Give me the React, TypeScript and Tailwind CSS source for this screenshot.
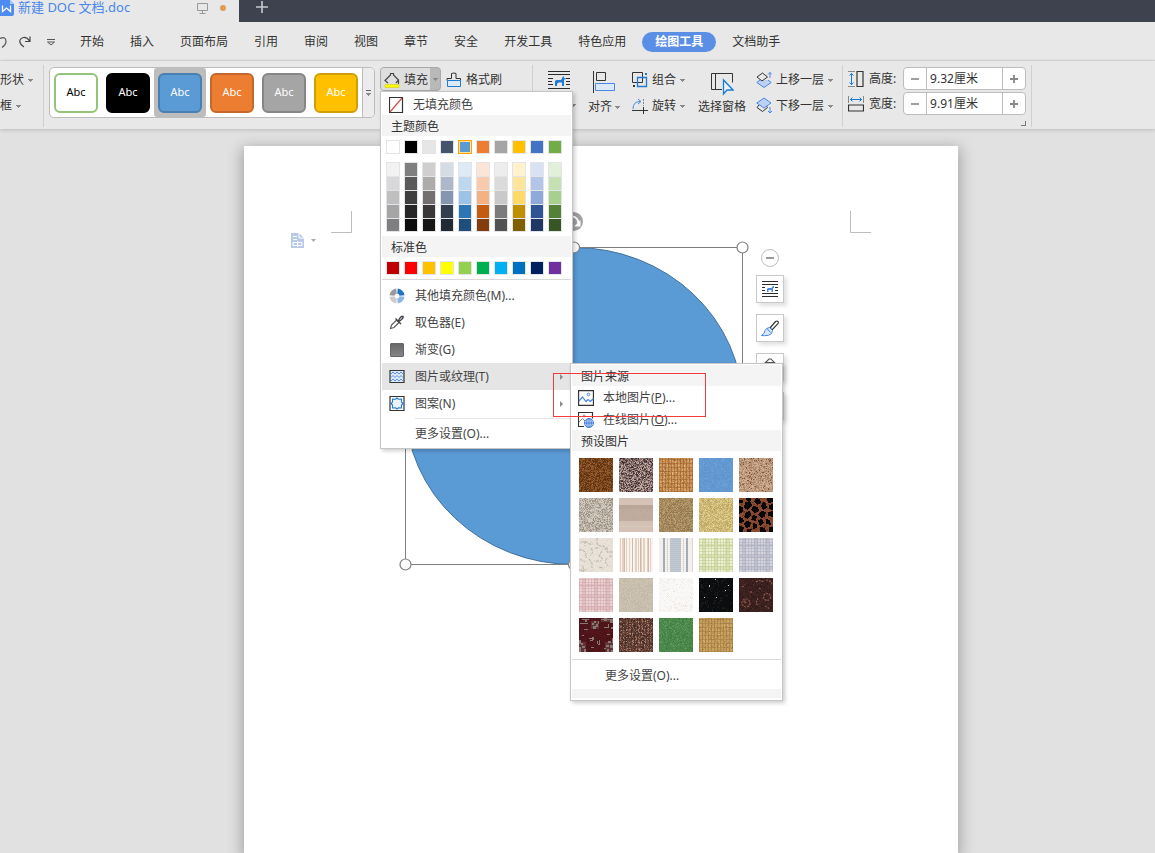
import React from "react";

type Kids = { children?: React.ReactNode };

const INK = "#333333";
const BLUE = "#1f7ad1";

/* ---------- small drawings ---------- */

function Icon({ w, h, children }: Kids & { w: number; h: number }) {
  return (
    <svg width={w} height={h} viewBox={`0 0 ${w} ${h}`} fill="none" stroke={INK} strokeWidth="1" className="shrink-0" aria-hidden="true">
      {children}
    </svg>
  );
}

function Caret() {
  return (
    <svg width="5" height="3" viewBox="0 0 5 3" fill="#8a8a8a" className="shrink-0" aria-hidden="true" shapeRendering="crispEdges">
      <path d="M0 0h5v1H0zM1 1h3v1H1zM2 2h1v1H2z" />
    </svg>
  );
}

function RightCaret() {
  return (
    <svg width="3" height="6" viewBox="0 0 3 6" fill="#8a8a8a" className="shrink-0" aria-hidden="true">
      <path d="M0 0 3 3 0 6z" />
    </svg>
  );
}

function WrapIcon() {
  return (
    <Icon w={22} h={21}>
      <path d="M0 1.500h22M0 4.500h22M0 8.500h5M18 8.500h4M0 11.500h4M18 11.500h4M0 14.500h5M18 14.500h4M0 18.500h22" stroke="#2b2b2b" strokeWidth="1.200" />
      <path d="M7 16v-5l1.500-1H13l2-3.500h1V8h1.500v1.500H16V16h-2v-3.500h-3.500L9 14v2z" fill={BLUE} stroke="none" />
    </Icon>
  );
}

function SmallWrapIcon() {
  return (
    <Icon w={16} h={18}>
      <path d="M0 1.500h16M0 4.500h16M0 7.500h3M13 7.500h3M0 10.500h3M13 10.500h3M0 13.500h16M0 16.500h16" stroke="#2b2b2b" />
      <path d="M5 12V9l1-1h3.500L11 6h1v2h-1v4H9.500v-2h-3v2z" fill="#4a86e8" stroke="none" />
    </Icon>
  );
}

/* ---------- texture swatches ---------- */

const SIDE = 34;

function random(seed: number) {
  let s = seed * 7919 + 17;
  return () => {
    s = (s * 1103515245 + 12345) % 2147483648;
    return s / 2147483648;
  };
}

type Texture = { name: string; base: string; dots?: [string, number][]; kind?: "weave" | "stripes" | "spots" | "bands" | "plaid" | "floral" | "cracks" };

const textures: Texture[] = [
  { name: "棕色大理石", base: "#7c461d", dots: [["#5f3212", 0.3], ["#8f572a", 0.28], ["#a2683a", 0.05]] },
  { name: "花岗岩", base: "#8d7672", dots: [["#5a4647", 0.26], ["#bcaaa3", 0.26], ["#382829", 0.08]] },
  { name: "编织物", base: "#cf955a", dots: [["#b27a42", 0.15], ["#e6b579", 0.12]], kind: "weave" },
  { name: "蓝色面巾纸", base: "#6499d1", dots: [["#5e94cc", 0.26], ["#6fa1d6", 0.15]] },
  { name: "沙滩", base: "#bf9a7d", dots: [["#aa8466", 0.25], ["#d0b195", 0.25], ["#7c5740", 0.06]] },
  { name: "鹅卵石", base: "#b9b0a3", dots: [["#9c9284", 0.25], ["#d0cac0", 0.3]] },
  { name: "信纸", base: "#bfac9e", dots: [["#b9a698", 0.12]], kind: "bands" },
  { name: "再生纸", base: "#a58a5e", dots: [["#917750", 0.28], ["#b99e70", 0.24]] },
  { name: "羊皮纸", base: "#cdb975", dots: [["#bca662", 0.22], ["#dfcf90", 0.26]] },
  { name: "豹纹", base: "#8b4b32", dots: [["#713924", 0.25]], kind: "spots" },
  { name: "裂纹", base: "#e9e2d9", dots: [["#e0d7cc", 0.2]], kind: "cracks" },
  { name: "细条纹", base: "#f8f3ed", kind: "stripes" },
  { name: "宽条纹", base: "#f2eeeb" },
  { name: "绿格布", base: "#edf0d3", kind: "plaid" },
  { name: "灰格布", base: "#d6d5de", kind: "plaid" },
  { name: "粉格布", base: "#ead3d3", kind: "plaid" },
  { name: "亚麻", base: "#c8bfae", dots: [["#c1b7a5", 0.25], ["#cec5b5", 0.2]] },
  { name: "白色大理石", base: "#faf8f6", dots: [["#ece6e2", 0.08], ["#f3efed", 0.12]] },
  { name: "星空", base: "#0c0d0e", dots: [["#1e2021", 0.1], ["#cccccc", 0.012]] },
  { name: "棕色花纹", base: "#3c2121", dots: [["#2f1919", 0.25], ["#4a2a27", 0.13]], kind: "floral" },
  { name: "红色花纹", base: "#51151a", dots: [["#461115", 0.2]], kind: "floral" },
  { name: "粗呢", base: "#70483b", dots: [["#4a312a", 0.28], ["#9c6e5b", 0.22], ["#b08b79", 0.06]], kind: "weave" },
  { name: "绿色大理石", base: "#4b894b", dots: [["#427b43", 0.2], ["#5c9a5c", 0.15]] },
  { name: "麻布", base: "#c69e5d", dots: [["#b18746", 0.12], ["#d6b075", 0.12]], kind: "weave" },
];

function speckle(texture: Texture, seed: number) {
  const next = random(seed);
  const paths = (texture.dots ?? []).map(() => "");
  for (let y = 0; y < SIDE; y++) {
    for (let x = 0; x < SIDE; x++) {
      let r = next();
      for (let i = 0; i < paths.length; i++) {
        const share = texture.dots![i][1];
        if (r < share) {
          paths[i] += `M${x} ${y}h1v1h-1z`;
          break;
        }
        r -= share;
      }
    }
  }
  return paths;
}

function lines(step: number, vertical: boolean, offset = 0) {
  let d = "";
  for (let p = offset; p < SIDE; p += step) d += vertical ? `M${p} 0h1v34h-1z` : `M0 ${p}h34v1H0z`;
  return d;
}

function Ornament({ texture, index }: { texture: Texture; index: number }) {
  if (texture.kind === "weave") {
    const dark = index === 21 ? "#3b2822" : index === 2 ? "#8e5826" : "#977039";
    return (
      <g fill={dark}>
        <path d={lines(3, true)} opacity="0.5" />
        <path d={lines(4, false, 1)} opacity={index === 21 ? 0.2 : 0.4} />
      </g>
    );
  }
  if (texture.kind === "bands") {
    return (
      <>
        <path d="M0 0h34v7H0z" fill="#d3c2b5" />
        <path d="M0 7h34v4H0z" fill="#b9a698" />
        <path d="M0 23h34v11H0z" fill="#d2c1b4" />
        <path d="M0 28h34v1H0z" fill="#d9cabe" />
      </>
    );
  }
  if (texture.kind === "stripes") {
    return (
      <>
        <path d={lines(3, true, 1)} fill="#e4d0bf" />
        <path d={lines(7, true, 3)} fill="#e9d0c7" />
        <path d={lines(8, true, 5)} fill="#cdbcae" />
      </>
    );
  }
  if (texture.kind === "plaid") {
    const color = index === 13 ? "#b7c685" : index === 14 ? "#a4a6bb" : "#cf9fa5";
    return (
      <g fill={color}>
        <path d={lines(3, true)} opacity="0.45" />
        <path d={lines(3, false, 1)} opacity="0.45" />
        <path d="M4 0h3v34H4zM15 0h4v34h-4zM26 0h4v34h-4zM0 6h34v3H0zM0 17h34v3H0zM0 28h34v3H0z" opacity="0.35" />
      </g>
    );
  }
  if (texture.kind === "spots") {
    return (
      <g fill="#090708">
        <path d="M0 2h4v3H0zM7 0h5v3H8zM17 0l4 1 1 4-4 2-3-3zM28 0h6v4l-5 1z" />
        <path d="M6 4l5-1 2 4-4 5-4-2zM24 4l3 1 1 5-4 2-2-4zM30 7l4-1v6l-4-1zM14 8l5 1 1 4-4 2-4-3zM0 8l4 1v5l-4 2z" />
        <path d="M7 14l4-1 1 4-3 4-4-2zM22 13l5 1-1 5-4 1-3-3zM29 14l5-1v6l-5-1zM14 17l4 1-1 5-5-1zM0 19l4 1 1 4-5 1z" />
        <path d="M7 23l5 1-1 5-4 1-2-4zM19 22l4-1 2 4-4 3zM27 21l4 1 1 5-5-1zM14 25l4 1v4l-4 1zM0 28l5 1-1 5H0zM8 31h5l-1 3H8zM21 29l5 1 1 4h-6zM30 29h4v5h-4z" />
      </g>
    );
  }
  if (texture.kind === "cracks") {
    return <path d="M2 4h6l2 2h4M6 3v5M18 0v6l3 2h4l2 4M0 12h4l3 3v5M12 10l2 4-3 4M16 10h4M23 13l-3 5 4 3M28 9v5h6M1 21l5 3M10 21l3 4v5M17 23h5M28 20l-2 4 3 4M30 18h4M4 28v6M20 29l4 1M0 32h7" fill="none" stroke="#a99e91" strokeWidth="0.7" strokeDasharray="3 1" shapeRendering="auto" />;
  }
  if (texture.kind === "floral" && index === 19) {
    return (
      <g fill="none" stroke="#8f5a4b" strokeWidth="1.200" strokeDasharray="2 1" shapeRendering="auto">
        <circle cx="28" cy="19" r="3.500" />
        <circle cx="7" cy="25" r="4" />
        <circle cx="6" cy="24" r="1" />
        <path d="M17 4q4-3 7 0M27 2q5 0 6 5M3 9l3-2M19 20l-2 5 2 3M20 10l3 2M26 28l5 3M12 13v3" />
      </g>
    );
  }
  if (texture.kind === "floral") {
    return (
      <g>
        <g fill="#877973">
          <path d="M3 1h7v1H3zM6 2h2v2H6zM1 5h8v1H1zM13 5h2v2h-2zM15 3h2v2h-2zM17 6h2v3h-2zM14 8h3v3h-3zM19 3h1v3h-1z" />
          <path d="M22 1h12v1H22zM25 0h3v3h-3zM31 2h3v3h-3zM25 9h5v1h-5zM29 6h1v3h-1zM32 9h2v2h-2z" />
          <path d="M10 20h3v1h-3zM13 19h2v3h-2zM11 22h3v1h-3zM18 23h1v3h-1zM19 26h2v1h-2zM20 22h1v4h-1z" />
          <path d="M0 22h2v4H0zM2 25h2v2H2zM3 28h3v2H3zM0 29h2v5H0zM5 31h2v3H5zM33 20h1v5h-1zM29 23h3v2h-3zM27 27h3v2h-3zM31 27h3v3h-3zM28 31h2v3h-2zM32 32h2v2h-2zM25 30h2v1h-2z" />
          <path d="M5 11h4v1H5zM12 29h3v1h-3zM28 16h3v1h-3zM3 17h2v1H3z" />
        </g>
        <path d="M12 3h8v8h-8zM0 24h7v10H0zM26 24h8v10h-8zM22 0h12v4H22z" fill="#877973" opacity="0.3" />
      </g>
    );
  }
  if (index === 12) {
    return (
      <>
        <path d="M11 0h11v34H11z" fill="#b8c1cb" />
        <path d="M4 0h2v34H4zM27 0h2v34h-2z" fill="#9ba6b2" />
        <path d="M8 0h1v34H8zM24 0h1v34h-1zM33 0h1v34h-1z" fill="#ded3cb" />
        <path d={lines(2, false)} fill="#ffffff" opacity="0.15" />
      </>
    );
  }
  return null;
}

function TextureSwatch({ texture, index }: { texture: Texture; index: number }) {
  return (
    <button type="button" aria-label={texture.name} className="size-[34px]">
      <svg viewBox="0 0 34 34" className="block size-full" shapeRendering="crispEdges" aria-hidden="true">
        <rect width="34" height="34" fill={texture.base} />
        {speckle(texture, index + 1).map((d, i) => (
          <path key={i} d={d} fill={texture.dots![i][0]} />
        ))}
        <Ornament texture={texture} index={index} />
      </svg>
    </button>
  );
}

/* ---------- title and menu bar ---------- */

const tabsBefore = ["开始", "插入", "页面布局", "引用", "审阅", "视图", "章节", "安全", "开发工具", "特色应用"];

function TitleBar() {
  return (
    <header className="flex h-[22px] bg-[#3e414e]">
      <div className="flex w-[239px] items-start bg-[#e8e8e8]">
        <svg width="14" height="16" viewBox="0 0 14 16" aria-hidden="true">
          <path d="M0 0h10l4 4v10a2 2 0 0 1-2 2H0z" fill="#4e8bf0" />
          <path d="M10 0l4 4h-4z" fill="#a9c8fb" />
          <path d="M2.500 5.500v6l4-3.500 4 3.500v-6" fill="none" stroke="#fff" strokeWidth="1.300" />
        </svg>
        <span className="ml-1 text-[13px] leading-[15px] text-[#4a86e8]">新建 DOC 文档.doc</span>
        <span className="ml-auto flex h-4 items-center gap-3 pr-[13px]">
          <Icon w={11} h={12}>
            <path d="M0.500 1.500h10v7h-10zM5.500 8.500v3M2.500 11.500h6" stroke="#999" />
          </Icon>
          <span className="size-[6px] rounded-full bg-[#e39b56]" />
        </span>
      </div>
      <button type="button" aria-label="新建标签" className="ml-[17px] h-[14px] w-3">
        <Icon w={12} h={14}>
          <path d="M0 7h12M6 1v12" stroke="#c9cad0" strokeWidth="1.600" />
        </Icon>
      </button>
    </header>
  );
}

function MenuBar() {
  return (
    <nav className="flex h-[39px] items-center border-b border-[#d8d8d8] pt-[2px] whitespace-nowrap">
      <div className="flex w-20 items-center">
        <button type="button" aria-label="撤销">
          <Icon w={7} h={14}>
            <path d="M0 3.500q6-2.500 6 3 0 3-4 6" strokeWidth="1.200" stroke="#555" />
          </Icon>
        </button>
        <button type="button" aria-label="恢复" className="ml-3">
          <Icon w={12} h={14}>
            <path d="M11 1.500v5H6M10.500 6Q8 2 4.500 2.500 0.500 3.500 0.800 7 1.500 10 5 12" stroke="#444" strokeWidth="1.200" />
          </Icon>
        </button>
        <button type="button" aria-label="自定义快速访问工具栏" className="ml-4">
          <Icon w={8} h={8}>
            <path d="M0 1.500h8M0.500 4l3.500 3 3.500-3z" stroke="#555" />
          </Icon>
        </button>
      </div>
      <div className="flex items-center gap-[26px]">
        {tabsBefore.map((t) => (
          <button type="button" key={t}>{t}</button>
        ))}
      </div>
      <button type="button" className="mx-4 h-5 rounded-full bg-[#5b8fe6] px-[13px] font-bold text-white">绘图工具</button>
      <button type="button">文档助手</button>
    </nav>
  );
}

/* ---------- ribbon ---------- */

const styles = [
  "border-[#93c47a] bg-white text-black",
  "border-black bg-black text-white",
  "border-[#4a7fb0] bg-[#5b9bd5] text-white",
  "border-[#c4682f] bg-[#ed7d31] text-white",
  "border-[#868686] bg-[#a5a5a5] text-white",
  "border-[#cf9f0a] bg-[#ffc000] text-white",
];

function Divider() {
  return <div className="h-[62px] w-px shrink-0 bg-[#cfcfcf]" />;
}

function Command({ icon, label }: { icon: React.ReactNode; label: string }) {
  return (
    <button type="button" className="flex h-[26px] items-center gap-1">
      {icon}
      <span>{label}</span>
      <Caret />
    </button>
  );
}

function SizeField({ id, label, value, icon }: { id: string; label: string; value: string; icon: React.ReactNode }) {
  return (
    <div className="flex items-center">
      {icon}
      <label htmlFor={id} className="ml-[5px] w-[34px]">{label}:</label>
      <div className="flex h-[23px] w-[123px] rounded-[4px] border border-[#bdbdbd] bg-white">
        <button type="button" aria-label={`减小${label}`} className="flex w-[22px] items-center justify-center">
          <Icon w={8} h={8}><path d="M0 4h8" stroke="#888" strokeWidth="1.600" /></Icon>
        </button>
        <input id={id} defaultValue={value} className="w-[77px] border-x border-[#bdbdbd] px-[3px] outline-none" />
        <button type="button" aria-label={`增大${label}`} className="flex w-[22px] items-center justify-center">
          <Icon w={8} h={8}><path d="M0 4h8M4 0v8" stroke="#888" strokeWidth="1.800" /></Icon>
        </button>
      </div>
    </div>
  );
}

function Ribbon() {
  return (
    <div className="relative z-10 flex h-[68px] pt-1 whitespace-nowrap shadow-[0_1px_4px_rgba(0,0,0,0.18)]">
      <div className="flex w-[43px] shrink-0 flex-col overflow-hidden pt-[2px]">
        <button type="button" className="flex h-[26px] items-center gap-1">形状 <Caret /></button>
        <button type="button" className="flex h-[26px] items-center gap-1">框 <Caret /></button>
      </div>
      <Divider />
      <div className="mt-[2px] ml-[5px] flex h-[51px] w-[326px] shrink-0 overflow-hidden rounded-[5px] border border-[#bcbcbc] bg-white">
        {styles.map((s, i) => (
          <button type="button" key={s} className={i === 2 ? "flex w-[52px] items-center justify-center rounded-[3px] bg-[#bdbdbd]" : "flex w-[52px] items-center justify-center"}>
            <span className={`flex h-10 w-11 items-center justify-center rounded-[6px] border-2 text-[11px] ${s}`}>Abc</span>
          </button>
        ))}
        <button type="button" aria-label="更多样式" className="flex flex-1 flex-col items-center justify-center gap-[2px] border-l border-[#bcbcbc] bg-[#ececec]">
          <span className="h-px w-[5px] bg-[#666]" />
          <Caret />
        </button>
      </div>
      <div className="mt-[2px] ml-[5px] flex h-[24px] w-[61px] shrink-0 items-stretch rounded-[4px] border border-[#a9a9a9] bg-[#b9b9b9]">
        <button type="button" className="flex w-[49px] items-center gap-1 rounded-l-[3px] bg-[#dedede] pt-[1px] pl-[3px]">
          <Icon w={16} h={16}>
            <path d="M4 11L1 8.500 6.500 3V1.500h3V3l5 5-2.500 3M14.500 8v4" stroke="#444" strokeWidth="1.200" />
            <path d="M1 12.500h14v3H1z" fill="#ffff00" stroke="#c9c900" strokeWidth="0.500" />
          </Icon>
          填充
        </button>
        <button type="button" aria-label="填充选项" className="flex flex-1 items-center justify-center"><Caret /></button>
      </div>
      <button type="button" className="mt-[2px] ml-[5px] flex h-6 items-center gap-1 pt-[1px]">
        <Icon w={16} h={16}>
          <path d="M1 8.500v-2h4.500v-5q2.500-1 4.500 0v5h4.500v2" />
          <path d="M1.500 8.500h13v6h-13z" stroke={BLUE} fill="#dce9f7" />
        </Icon>
        格式刷
      </button>
      <div className="ml-[30px]"><Divider /></div>
      <button type="button" className="mt-[5px] ml-[15px] flex w-[28px] flex-col" aria-label="环绕">
        <WrapIcon />
        <span className="mt-[13px] self-end"><Caret /></span>
      </button>
      <button type="button" className="mt-[6px] ml-3 flex flex-col items-start">
        <span className="pl-[5px]">
          <Icon w={22} h={22}>
            <path d="M0.500 0v22M3.500 1.500h9v8h-9z" />
            <path d="M2.500 12.500h19v7h-19z" stroke="#4a86e8" fill="#dde8f8" />
          </Icon>
        </span>
        <span className="mt-[5px] flex items-center gap-[3px] leading-[18px]">对齐 <Caret /></span>
      </button>
      <div className="ml-3 flex flex-col pt-[2px]">
        <Command label="组合" icon={
          <Icon w={16} h={16}>
            <path d="M0.500 0.500h10v10h-10z" />
            <path d="M5.500 5.500h9v9h-9z" stroke={BLUE} strokeWidth="1.300" />
            <path d="M13 1h2v2h-2z" fill={BLUE} stroke="none" />
            <path d="M1 13h2v2H1z" fill={INK} stroke="none" />
          </Icon>} />
        <Command label="旋转" icon={
          <Icon w={16} h={16}>
            <path d="M0 12.500h16M11.500 9v7" />
            <path d="M11.500 1v7" strokeDasharray="2 1" stroke="#888" />
            <path d="M1 11Q1 3.500 8 3.500M6 1l3 2.500L6 6" stroke="#4a86e8" />
          </Icon>} />
      </div>
      <button type="button" className="mt-[7px] ml-[13px] flex flex-col items-center">
        <Icon w={24} h={24}>
          <path d="M12 17.500H1.500v-16h21v9M5.500 1.500v16" />
          <path d="M13.500 8v14l3.500-4h6z" stroke={BLUE} strokeWidth="1.300" fill="#eaf2fb" />
        </Icon>
        <span className="mt-[2px] leading-[18px]">选择窗格</span>
      </button>
      <div className="ml-[10px] flex flex-col pt-[2px]">
        <Command label="上移一层" icon={
          <Icon w={16} h={18}>
            <path d="M4 9L0.800 11.500 8 16.500l7.200-5L12 9" stroke="#4a86e8" fill="#bdd1f4" />
            <path d="M1 6l5.500-4 5 4-5.500 4z" fill="#e8e8e8" />
            <path d="M14 7V1.500M12 3.500l2-2 2 2" stroke="#4a86e8" />
          </Icon>} />
        <Command label="下移一层" icon={
          <Icon w={16} h={18}>
            <path d="M3 8L1 10.500l5.500 4 5-4-1.500-2" />
            <path d="M0.800 6L8 1l7 5-7 5z" stroke="#4a86e8" fill="#bdd1f4" />
            <path d="M14 10v6M12 14l2 2 2-2" stroke="#4a86e8" />
          </Icon>} />
      </div>
      <div className="ml-[9px]"><Divider /></div>
      <div className="ml-[5px] flex flex-col gap-[2px] pt-[2px] pr-[5px]">
        <SizeField id="shape-height" label="高度" value="9.32厘米" icon={
          <Icon w={16} h={16}>
            <path d="M0 0.500h7M0 15.500h7" stroke="#888" />
            <path d="M3.500 2v12M1.500 4.500l2-2 2 2M1.500 11.500l2 2 2-2" stroke={BLUE} />
            <path d="M9 0.500h6v15H9z" strokeWidth="1.200" />
          </Icon>} />
        <SizeField id="shape-width" label="宽度" value="9.91厘米" icon={
          <Icon w={16} h={16}>
            <path d="M0.500 0v7M15.500 0v7" stroke="#888" />
            <path d="M2 3.500h12M4.500 1.500l-2 2 2 2M11.500 1.500l2 2-2 2" stroke={BLUE} />
            <path d="M0.500 9h15v6h-15z" strokeWidth="1.200" />
          </Icon>} />
        <button type="button" aria-label="更多大小选项" className="mt-1 size-[5px] self-end border-r border-b border-[#777]" />
      </div>
      <Divider />
    </div>
  );
}

/* ---------- fill menu ---------- */

const themeTop = ["#ffffff", "#000000", "#e7e6e6", "#44546a", "#5b9bd5", "#ed7d31", "#a5a5a5", "#ffc000", "#4472c4", "#70ad47"];
const themeShades = [
  ["#f2f2f2", "#7f7f7f", "#d0cece", "#d6dce4", "#deebf6", "#fbe5d5", "#ededed", "#fff2cc", "#d9e2f3", "#e2efd9"],
  ["#d8d8d8", "#595959", "#aeabab", "#adb9ca", "#bdd7ee", "#f7cbac", "#dbdbdb", "#fee599", "#b4c6e7", "#c5e0b3"],
  ["#bfbfbf", "#3f3f3f", "#757070", "#8496b0", "#9cc3e5", "#f4b183", "#c9c9c9", "#ffd965", "#8eaadb", "#a8d08d"],
  ["#a5a5a5", "#262626", "#3a3838", "#323f4f", "#2e75b5", "#c55a11", "#7b7b7b", "#bf9000", "#2f5496", "#538135"],
  ["#7f7f7f", "#0c0c0c", "#171616", "#222a35", "#1e4e79", "#833c0b", "#525252", "#7f6000", "#1f3864", "#375623"],
];
const standard = ["#c00000", "#ff0000", "#ffc000", "#ffff00", "#92d050", "#00b050", "#00b0f0", "#0070c0", "#002060", "#7030a0"];

function ColorRow({ colors, selected, closed = true }: { colors: string[]; selected?: number; closed?: boolean }) {
  return (
    <div className="flex gap-1 pl-[5px]">
      {colors.map((c, i) => (
        <button
          type="button"
          key={c + i}
          aria-label={c}
          style={{ backgroundColor: c }}
          className={i === selected ? "size-[14px] border border-[#ffa500] ring-1 ring-[#ffdf9c] ring-inset" : closed ? "size-[14px] border border-[#e2e4e7]" : "size-[14px] border-x border-t border-[#e2e4e7]"}
        />
      ))}
    </div>
  );
}

function MenuHeading({ children }: Kids) {
  return <div className="mx-[1px] h-[21px] bg-[#f4f4f4] pl-[9px] leading-6 text-[#333]">{children}</div>;
}

function MenuItem({ icon, label, active, arrow }: { icon: React.ReactNode; label: string; active?: boolean; arrow?: boolean }) {
  return (
    <button type="button" className={`mx-[1px] flex h-[27px] items-center pr-2 pl-[7px] text-left ${active ? "bg-[#e5e5e5]" : ""}`}>
      {icon}
      <span className="ml-[10px] flex-1">{label}</span>
      {arrow && <RightCaret />}
    </button>
  );
}

function FillMenu() {
  return (
    <div className="absolute top-[91px] left-[380px] z-20 flex w-[193px] flex-col border border-[#c6c6c6] bg-white text-[#444] shadow-[2px_2px_4px_rgba(0,0,0,0.2)]">
      <button type="button" className="flex h-[23px] items-center gap-[9px] pt-[2px] pl-2 text-left">
        <Icon w={15} h={16}>
          <path d="M0.500 0.500h13v15h-13z" strokeWidth="1.200" />
          <path d="M1 15L13 1" stroke="#c94f4f" strokeWidth="1.200" />
        </Icon>
        无填充颜色
      </button>
      <MenuHeading>主题颜色</MenuHeading>
      <div className="pt-1"><ColorRow colors={themeTop} selected={4} /></div>
      <div className="pt-2 pb-1">
        {themeShades.map((row, i) => <ColorRow key={i} colors={row} closed={i === 4} />)}
      </div>
      <MenuHeading>标准色</MenuHeading>
      <div className="pt-1 pb-1"><ColorRow colors={standard} /></div>
      <div className="mx-[1px] mb-[2px] h-px bg-[#d9d9d9]" />
      <MenuItem label="其他填充颜色(M)..." icon={
        <svg width="16" height="16" viewBox="0 0 16 16" fill="none" strokeWidth="5" aria-hidden="true">
          <path d="M8.500 3A5 5 0 0 1 13 7.500" stroke="#1f73c8" />
          <path d="M13 8.500A5 5 0 0 1 8.500 13" stroke="#8bb6e6" />
          <path d="M7.500 13A5 5 0 0 1 3 8.500" stroke="#cbcbcb" />
          <path d="M3 7.500A5 5 0 0 1 7.500 3" stroke="#999" />
        </svg>} />
      <MenuItem label="取色器(E)" icon={
        <Icon w={16} h={16}>
          <path d="M1.500 13.500L2.500 10 7.500 5l2.500 2.500L5 12.500z" stroke="#555" strokeWidth="1.100" />
          <path d="M6.500 3.500l5.500 5.500M9.500 5.500L11 3l1.500-1.500h1.500V3L12.500 4.500 10 6.500" stroke="#444" strokeWidth="1.400" />
        </Icon>} />
      <MenuItem label="渐变(G)" icon={<span className="mx-px size-[14px] rounded-[1px] border border-[#666] bg-linear-to-b from-[#686868] to-[#858585]" />} />
      <MenuItem active arrow label="图片或纹理(T)" icon={
        <Icon w={16} h={16}>
          <path d="M1 1.500h14v12H1z" strokeWidth="1.200" fill="#dce9f8" />
          <path d="M2 5l2-2 2 2 2-2 2 2 2-2 2 2M2 8.500l2-2 2 2 2-2 2 2 2-2 2 2M2 12l2-2 2 2 2-2 2 2 2-2 2 2" stroke="#4a86d8" strokeWidth="0.900" />
        </Icon>} />
      <MenuItem arrow label="图案(N)" icon={
        <Icon w={16} h={16}>
          <path d="M1 0.500h14v14H1z" strokeWidth="1.200" />
          <path d="M8 2l1.500 1.200L12.500 3v3L14 7.500 12.500 9v3l-3-.2L8 13l-1.500-1.200-3 .2V9L2 7.500 3.500 6V3l3 .2z" stroke={BLUE} fill="#eaf2fb" strokeWidth="1.100" />
        </Icon>} />
      <div className="mt-[1px] mr-[1px] ml-[34px] h-px bg-[#e6e6e6]" />
      <button type="button" className="h-[29px] pl-[34px] text-left">更多设置(O)...</button>
    </div>
  );
}

function TextureMenu() {
  return (
    <div className="absolute top-[363px] left-[570px] z-30 flex w-[213px] flex-col border border-[#c6c6c6] bg-white text-[#444] shadow-[2px_2px_4px_rgba(0,0,0,0.2)]">
      <div className="pt-[1px]"><MenuHeading>图片来源</MenuHeading></div>
      <button type="button" className="flex h-[22px] items-center gap-[9px] pt-[1px] pl-[7px] text-left">
        <Icon w={16} h={16}>
          <path d="M0.500 0.500h15v15h-15z" strokeWidth="1.300" />
          <path d="M1 11l3.500-4 3.500 4.500 2-2 2.500 2 3-3" stroke="#4a86e8" strokeWidth="1.200" />
          <circle cx="10.500" cy="4.500" r="1.300" stroke="#4a86e8" />
        </Icon>
        <span>本地图片(<u>P</u>)...</span>
      </button>
      <button type="button" className="flex h-[22px] items-center gap-[9px] pt-[1px] pl-[7px] text-left">
        <Icon w={16} h={16}>
          <path d="M6 14.500H0.500v-14h14v6" strokeWidth="1.200" />
          <path d="M1 10l3.500-3.500L7 9" stroke="#888" />
          <circle cx="6" cy="4" r="1" stroke="#888" />
          <circle cx="11" cy="11" r="4.500" stroke="#3f7ad8" fill="#d8e6fb" />
          <path d="M6.500 11h9M11 6.500v9" stroke="#3f7ad8" />
          <ellipse cx="11" cy="11" rx="2.300" ry="4.500" stroke="#3f7ad8" />
        </Icon>
        <span>在线图片(<u>O</u>)...</span>
      </button>
      <MenuHeading>预设图片</MenuHeading>
      <div className="grid grid-cols-[repeat(5,34px)] gap-[6px] px-2 py-[7px]">
        {textures.map((t, i) => <TextureSwatch key={t.name} texture={t} index={i} />)}
      </div>
      <div className="mx-[1px] h-px bg-[#d9d9d9]" />
      <button type="button" className="h-[29px] pt-[2px] pl-[34px] text-left">更多设置(O)...</button>
      <div className="mx-[1px] mb-[2px] h-[9px] bg-[#f4f4f4]" />
    </div>
  );
}

/* ---------- document ---------- */

function SideButton({ children, label }: Kids & { label: string }) {
  return (
    <button type="button" aria-label={label} className="flex size-7 items-center justify-center border border-[#c9c9c9] bg-white shadow-[3px_3px_4px_rgba(0,0,0,0.12)]">
      {children}
    </button>
  );
}

function DocumentPage() {
  return (
    <main className="flex flex-1 justify-center overflow-hidden bg-[#e1e1e1] pt-[17px] pl-[47px]">
      <article className="relative w-[714px] shrink-0 bg-white shadow-[0_4px_14px_2px_rgba(0,0,0,0.28)]">
        <svg width="714" height="440" viewBox="0 0 714 440" fill="none" className="absolute top-0 left-0" role="img" aria-label="椭圆">
          <path d="M107.500 65v21.500H87M606.500 65v21.500H627" stroke="#bdbdbd" />
          <path d="M47 87h8l5 5v10H47z" fill="#b7cbe8" />
          <path d="M55 87v5h5M49 90.500h4M49 93.500h4M49 96.500h9v3h-9zM53.500 95v6" stroke="#fff" />
          <path d="M67 93h5l-2.500 3z" fill="#aaa" />
          <ellipse cx="330" cy="260" rx="168.500" ry="158.500" fill="#5b9bd5" stroke="#41719c" />
          <path d="M161.500 101.500h337v317h-337zM328.500 82v20" stroke="#7f7f7f" />
          <g fill="#fff" stroke="#7f7f7f" strokeWidth="1.200">
            <circle cx="161.500" cy="418.500" r="5.500" />
            <circle cx="330" cy="418.500" r="5.500" />
            <circle cx="498.500" cy="418.500" r="5.500" />
            <circle cx="330" cy="101.500" r="5.500" />
            <circle cx="498.500" cy="101.500" r="5.500" />
          </g>
          <circle cx="329.500" cy="75.500" r="9.500" fill="#a0a0a0" />
          <path d="M324 73q5-5 9 0 1.500 2 1 4" stroke="#fff" strokeWidth="2" />
          <path d="M336.500 74v6.500H330z" fill="#fff" />
        </svg>
        <div className="absolute top-[103px] left-[512px] flex flex-col items-center gap-[11px]">
          <button type="button" aria-label="收起" className="mb-[-3px] flex size-[18px] items-center justify-center rounded-full border border-[#bdbdbd] bg-white">
            <span className="h-[2px] w-2 bg-[#999]" />
          </button>
          <SideButton label="布局选项"><SmallWrapIcon /></SideButton>
          <SideButton label="形状样式">
            <Icon w={18} h={18}>
              <path d="M9 9l5.500-6.500q1.500-1 2.500 0 .8 1-.3 2.300L11 11z" strokeWidth="1.200" />
              <path d="M8.500 8.500l3 3q0 4-4 4.800Q3 17 .5 16.500 4 14 4 11.500q1-2.500 4.500-3zM6 9.500l3.500 4" stroke="#4a86e8" fill="#dbe7fb" />
            </Icon>
          </SideButton>
          <SideButton label="形状填充">
            <Icon w={16} h={20}><path d="M1.500 7.500L7 2h2l5.500 5.500-3 6h-7zM4 5.500h8" stroke="#555" strokeWidth="1.100" /></Icon>
          </SideButton>
          <SideButton label="形状轮廓" />
        </div>
      </article>
    </main>
  );
}

export default function App() {
  return (
    <div className="relative flex h-screen flex-col overflow-hidden bg-[#e8e8e8] font-['Noto_Sans','Noto_Sans_CJK_SC',sans-serif] text-xs text-[#333]">
      <TitleBar />
      <MenuBar />
      <Ribbon />
      <DocumentPage />
      <FillMenu />
      <TextureMenu />
      <div className="pointer-events-none absolute top-[373px] left-[553px] z-40 h-11 w-[153px] border border-[#f03c3c]" />
    </div>
  );
}
